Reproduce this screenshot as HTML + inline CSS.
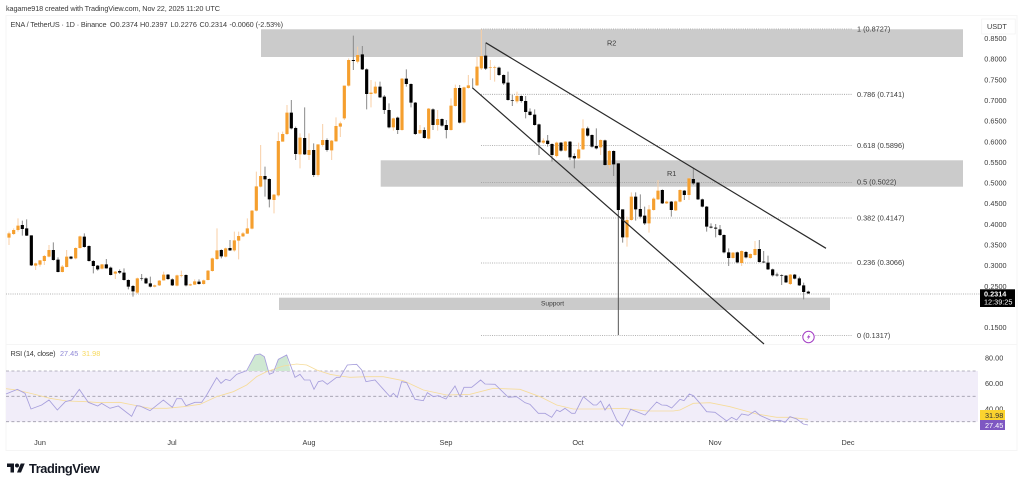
<!DOCTYPE html>
<html><head><meta charset="utf-8"><style>
html,body{margin:0;padding:0;background:#fff;width:1024px;height:486px;overflow:hidden}
svg{display:block;position:absolute;left:0;top:0;filter:blur(.3px)}
text{font-family:"Liberation Sans",sans-serif;font-size:7.3px;fill:#3a3a3a}
.ow{stroke:#f8cfa6;stroke-width:3;fill:none}
.bw{stroke:#8a8a8a;stroke-width:3;fill:none}
.ob{stroke:#f59f2e;stroke-width:9.500;fill:none}
.bb{stroke:#000;stroke-width:9.500;fill:none}
.fib{stroke:#9a9a9a;stroke-width:.8;stroke-dasharray:1 1.2;fill:none}
.dash{stroke:#a09dac;stroke-width:.8;stroke-dasharray:3 2.4;fill:none}
</style></head><body>
<svg width="1024" height="486" viewBox="0 0 1024 486" xmlns="http://www.w3.org/2000/svg">
<rect width="1024" height="486" fill="#fff"/>
<path d="M6 15.5H1017V450.5H6Z M6 344.5H1017" fill="none" stroke="#f5f5f5" stroke-width="1"/>

<text x="6" y="11" textLength="214">kagame918 created with TradingView.com, Nov 22, 2025 11:20 UTC</text>
<text x="10.5" y="27" textLength="96">ENA / TetherUS · 1D · Binance</text>
<text x="110" y="27">O0.2374</text><text x="140" y="27">H0.2397</text><text x="170.5" y="27">L0.2276</text><text x="199.5" y="27">C0.2314</text><text x="229.5" y="27" textLength="53.5">-0.0060 (-2.53%)</text>

<!-- zones -->
<rect x="261" y="29.3" width="702" height="27.7" fill="#cbcbcb"/>
<rect x="380.7" y="160.3" width="582.3" height="26.4" fill="#cbcbcb"/>
<rect x="279" y="297.7" width="551" height="12.3" fill="#cbcbcb"/>
<text x="607" y="45.5">R2</text><text x="667" y="176">R1</text><text x="541" y="305.5" style="font-size:6.6px" fill="#222">Support</text>

<!-- fib -->
<path class="fib" d="M481 29H851.7M481 94.3H851.7M481 145.5H851.7M481 182.5H851.7M481 218H851.7M481 263H851.7M481 335.5H851.7"/>
<path class="fib" d="M6 294H985"/>
<text x="857" y="31.5">1 (0.8727)</text><text x="857" y="97">0.786 (0.7141)</text><text x="857" y="148">0.618 (0.5896)</text><text x="857" y="184.5">0.5 (0.5022)</text><text x="857" y="220.5">0.382 (0.4147)</text><text x="857" y="265">0.236 (0.3066)</text><text x="857" y="338">0 (0.1317)</text>

<!-- candles: left low -->
<g transform="translate(0,170) scale(.33333)">
<path class="ow" d="M27 185V225M41 175V195M54 145V185M107 278V300M120 270V290M133 255V285M147 225V262M187 285V307M200 240V292M227 232V268M240 197V236M306 282V298M346 303V327M412 323V372M464 344V352M478 330V348M491 305V332M531 314V349M544 302V322M571 341V348M584 328V345M611 329V344M624 300V331M637 263V305M651 175V270M677 233V262M703 185V245M716 185V268M729 186V201M742 145V192M756 120V178M769 5V124M782 -75V52M822 72V130"/>
<path class="bw" d="M67 152V197M80 148V198M94 196V288M160 217V272M174 262V307M213 258V268M253 190V233M267 226V275M280 270V310M293 285V302M319 267V296M332 290V316M359 298V312M372 295V332M385 328V358M399 345V380M425 312V332M438 322V342M451 320V352M504 312V330M517 325V348M558 313V349M597 328V344M664 238V265M690 210V243M795 -10V80M808 25V112"/>
<path class="ob" d="M27 190V203M41 180V192M54 167V180M107 280V287M120 271V284M133 258V273M147 240V260M187 290V306M200 260V291M227 234V265M240 199V234M306 283V296M346 305V311M412 325V368M464 346V350M478 332V346M491 314V331M531 316V347M544 316V318M571 343V346M584 334V344M611 331V342M624 302V330M637 265V303M651 241V267M677 235V260M703 211V241M716 198V212M729 190V199M742 175V191M756 122V176M769 49V122M782 18V50M822 74V90"/>
<path class="bb" d="M67 165V177M80 175V197M94 196V286M160 240V270M174 269V306M213 260V266M253 200V231M267 228V273M280 273V288M293 287V298M319 283V295M332 293V315M359 303V308M372 308V330M385 330V350M399 348V364M425 325V326.500M438 325V340M451 340V350M504 314V327M517 328V346M558 315V346M597 335V342M664 240V259M690 234V241M795 18V28M808 27V88"/>
</g>
<!-- candles: Jul-Aug top -->
<g transform="scale(.33333)">
<path class="ow" d="M835 397V590M848 395V425M861 315V405M900 400V505M927 400V480M954 433V530M968 372V440M995 420V480M1008 352V425M1021 365V411"/>
<path class="bw" d="M874 300V388M887 380V480M914 322V465M941 430V531M981 415V455"/>
<path class="ob" d="M835 423V586M848 402V425M861 338V402M900 413V463M927 450V465M954 433V525M968 420V435M995 422V451M1008 378V424M1021 370V380"/>
<path class="bb" d="M874 338V385M887 384V462M914 414V463M941 450V525M981 420V450"/>
</g>
<!-- candles: Aug-Oct -->
<g transform="translate(340,20) scale(.33333)">
<path class="ow" d="M13 197V300M26 115V200M53 80V130M93 180V262M106 185V222M160 293V332M186 174V332M240 315V342M266 264V358M293 270V332M333 235V332M346 194V260M372 200V310M385 165V206M411 110V198M424 28V150M451 120V180M464 137V185M531 215V250M610 355V372M650 365V412M676 363V394M716 368V417M729 298V390M782 358V405M808 390V445"/>
<path class="bw" d="M40 47V150M67 78V150M80 145V268M120 185V234M133 225V282M147 250V325M173 290V342M199 148V200M213 190V262M226 246V345M253 322V356M279 265V330M306 295V320M319 300V355M359 195V310M398 175V202M437 70V150M477 140V168M491 163V195M504 155V242M517 225V258M544 226V248M557 228V295M570 265V287M584 268V317M597 311V405M623 345V380M636 370V425M663 366V395M690 363V420M703 400V445M743 320V350M756 343V383M769 325V388M795 359V437M821 391V468"/>
<path class="ob" d="M13 197V295M26 120V197M53 105V125M93 218V222M106 200V220M160 295V322M186 176V330M240 330V340M266 266V356M293 297V315M333 257V330M346 204V258M372 202V307M385 196V204M411 140V196M424 108V145M451 142V144M464 142V144M531 228V244M610 362V368M650 368V408M676 365V392M716 388V415M729 325V388M782 360V382M808 393V435"/>
<path class="bb" d="M40 120V123M67 103V148M80 148V222M120 200V232M133 230V270M147 270V322M173 293V330M199 176V192M213 192V248M226 248V342M253 330V354M279 268V315M306 297V317M319 315V330M359 204V308M437 107V146M477 143V165M491 165V190M504 188V240M517 240V242M544 228V243M557 243V276M570 275V285M584 284V315M597 313V367M623 362V372M636 372V405M663 368V392M690 365V412M703 408V415M743 325V347M756 345V380M769 378V385M795 361V435M821 393V433"/>
</g>
<!-- candles: Oct-Nov -->
<g transform="translate(560,160) scale(.33333)">
<path d="M175 10V525" stroke="#555" stroke-width="3" fill="none"/>
<path class="ow" d="M201 170V260M214 97V182M267 135V218M281 112V152M294 60V120M320 122V132M347 122V153M360 88V127M387 53V120M519 276V296M545 271V318M571 280V296M585 243V287M691 342V375"/>
<path class="bw" d="M188 148V248M227 97V182M241 103V175M254 140V195M307 88V132M334 123V170M373 90V120M400 25V75M414 66V120M427 116V142M440 138V215M453 190V205M467 192V232M480 195V228M492 223V280M506 265V318M532 275V310M558 273V295M598 240V308M611 273V309M624 287V330M638 326V350M651 338V350M665 343V375M678 345V369M704 342V358M718 350V378M731 368V418M745 392V402"/>
<path class="ob" d="M201 180V232M214 110V180M267 148V190M281 116V150M294 92V118M320 125V130M347 124V151M360 90V125M387 55V105M519 278V294M545 273V309M571 282V294M585 267V285M691 344V372"/>
<path class="bb" d="M175 10V150M188 148V232M227 110V148M241 147V170M254 167V190M307 90V130M334 125V150M373 92V105M400 57V70M414 68V118M427 118V140M440 140V200M453 200V203M467 203V206M480 208V225M492 225V277M506 277V294M532 277V307M558 276V292M598 267V306M611 305V307M624 308V328M638 328V346M651 344V346M665 345V347M678 347V367M704 344V356M718 355V376M731 376V396M745 395V400"/>
</g>

<!-- channel -->
<path d="M485.700 42.700L826 248.300M472.300 87.700L764 344" stroke="#2a2a2a" stroke-width="1.200" fill="none"/>

<!-- lightning icon -->
<circle cx="808.500" cy="337" r="5.700" fill="#fff" stroke="#a23cc4" stroke-width="1"/>
<path d="M810 333.500L806.800 337.500H808.600L807.200 340.500L810.400 336.300H808.600Z" fill="#a23cc4"/>

<!-- price axis -->
<rect x="981.700" y="19" width="33.500" height="15" fill="#fff" stroke="#f0f0f0" stroke-width=".7"/>
<text x="987" y="29">USDT</text>
<g>
<text x="984.300" y="41">0.8500</text><text x="984.300" y="61.500">0.8000</text><text x="984.300" y="82.500">0.7500</text><text x="984.300" y="103">0.7000</text><text x="984.300" y="123.500">0.6500</text><text x="984.300" y="144.500">0.6000</text><text x="984.300" y="165">0.5500</text><text x="984.300" y="185.500">0.5000</text><text x="984.300" y="206">0.4500</text><text x="984.300" y="227">0.4000</text><text x="984.300" y="247.500">0.3500</text><text x="984.300" y="268">0.3000</text><text x="984.300" y="289">0.2500</text><text x="984.300" y="330">0.1500</text>
</g>
<rect x="980" y="289.300" width="35" height="17.700" fill="#000"/>
<text x="984" y="296.500" style="fill:#fff;font-weight:bold">0.2314</text>
<text x="984" y="304.500" style="fill:#fff">12:39:25</text>

<!-- RSI -->
<text x="10.500" y="356" textLength="45">RSI (14, close)</text>
<text x="60" y="356" style="fill:#8f88d6">27.45</text><text x="82" y="356" style="fill:#f7d95c">31.98</text>
<rect x="6" y="371" width="972" height="50.700" fill="#f1edf9"/>
<path class="dash" d="M6 371H978M6 396.300H978M6 421.700H978"/>
<g transform="translate(0,340) scale(.33333)">
<path d="M742 93L765 45L780 42L793 50L805 93ZM825 93L835 58L860 45L872 93Z" fill="#cfe8d2"/>
<path d="M18 146L50 150L100 162L150 175L200 183L260 185L300 188L360 187L400 195L450 205L500 205L550 200L600 193L650 170L700 155L740 135L770 110L800 95L850 78L890 72L920 75L950 90L990 103L1020 108L1050 112L1100 110L1150 110L1210 122L1270 150L1340 165L1410 163L1480 145L1560 148L1620 170L1670 195L1720 207L1800 207L1870 205L1940 213L2020 213L2040 210L2080 190L2130 188L2190 200L2270 222L2330 232L2370 232L2424 238" fill="none" stroke="#f6dc9a" stroke-width="2.600"/>
<path d="M18 162L52 148L75 160L93 207L125 195L147 180L172 210L196 185L215 180L238 148L265 187L293 198L305 190L330 205L355 198L395 229L410 197L420 198L450 212L490 180L517 202L530 176L545 176L558 197L585 187L605 187L620 165L650 113L663 130L677 118L690 122L710 103L740 92L765 45L780 42L793 50L808 103L820 98L835 58L860 45L885 112L900 103L913 120L930 120L942 148L955 125L968 122L982 133L1010 112L1020 112L1042 75L1070 73L1085 90L1098 125L1125 120L1170 170L1180 160L1192 172L1205 125L1220 128L1245 178L1270 182L1282 158L1300 170L1315 167L1338 177L1365 138L1380 170L1392 142L1415 142L1442 120L1455 132L1485 133L1525 172L1550 170L1575 188L1590 193L1615 220L1635 220L1655 232L1670 210L1680 215L1695 205L1715 220L1725 220L1750 170L1780 195L1790 195L1802 183L1815 210L1828 193L1850 240L1867 258L1892 208L1935 225L1970 186L1985 195L2000 196L2015 204L2040 178L2052 182L2068 162L2080 167L2100 190L2120 215L2145 217L2180 243L2195 232L2210 240L2225 222L2245 226L2265 213L2280 226L2315 242L2340 241L2355 247L2370 230L2390 237L2410 252L2424 255" fill="none" stroke="#a79fdc" stroke-width="2.600"/>
</g>
<text x="985" y="360.500">80.00</text><text x="985" y="386">60.00</text><text x="985" y="411.500">40.00</text>
<rect x="980" y="410" width="25" height="10" fill="#fbd32f"/><text x="985" y="418" style="fill:#333">31.98</text>
<rect x="980" y="420" width="25" height="10" fill="#7e57c2"/><text x="985" y="428" style="fill:#fff">27.45</text>

<!-- time axis -->
<g style="text-anchor:middle">
<text x="40" y="445">Jun</text><text x="172" y="445">Jul</text><text x="309" y="445">Aug</text><text x="446" y="445">Sep</text><text x="578" y="445">Oct</text><text x="715" y="445">Nov</text><text x="848" y="445">Dec</text>
</g>

<!-- logo -->
<g transform="translate(7,461.500) scale(.5)" fill="#131722">
<path d="M14 22H7V11H0V4h14v18zM28 22h-8l7.500-18h8L28 22z"/><circle cx="20" cy="8" r="4"/>
</g>
<text x="29" y="473" style="font-size:12.800px;font-weight:bold;fill:#131722" textLength="71">TradingView</text>
</svg>
</body></html>
